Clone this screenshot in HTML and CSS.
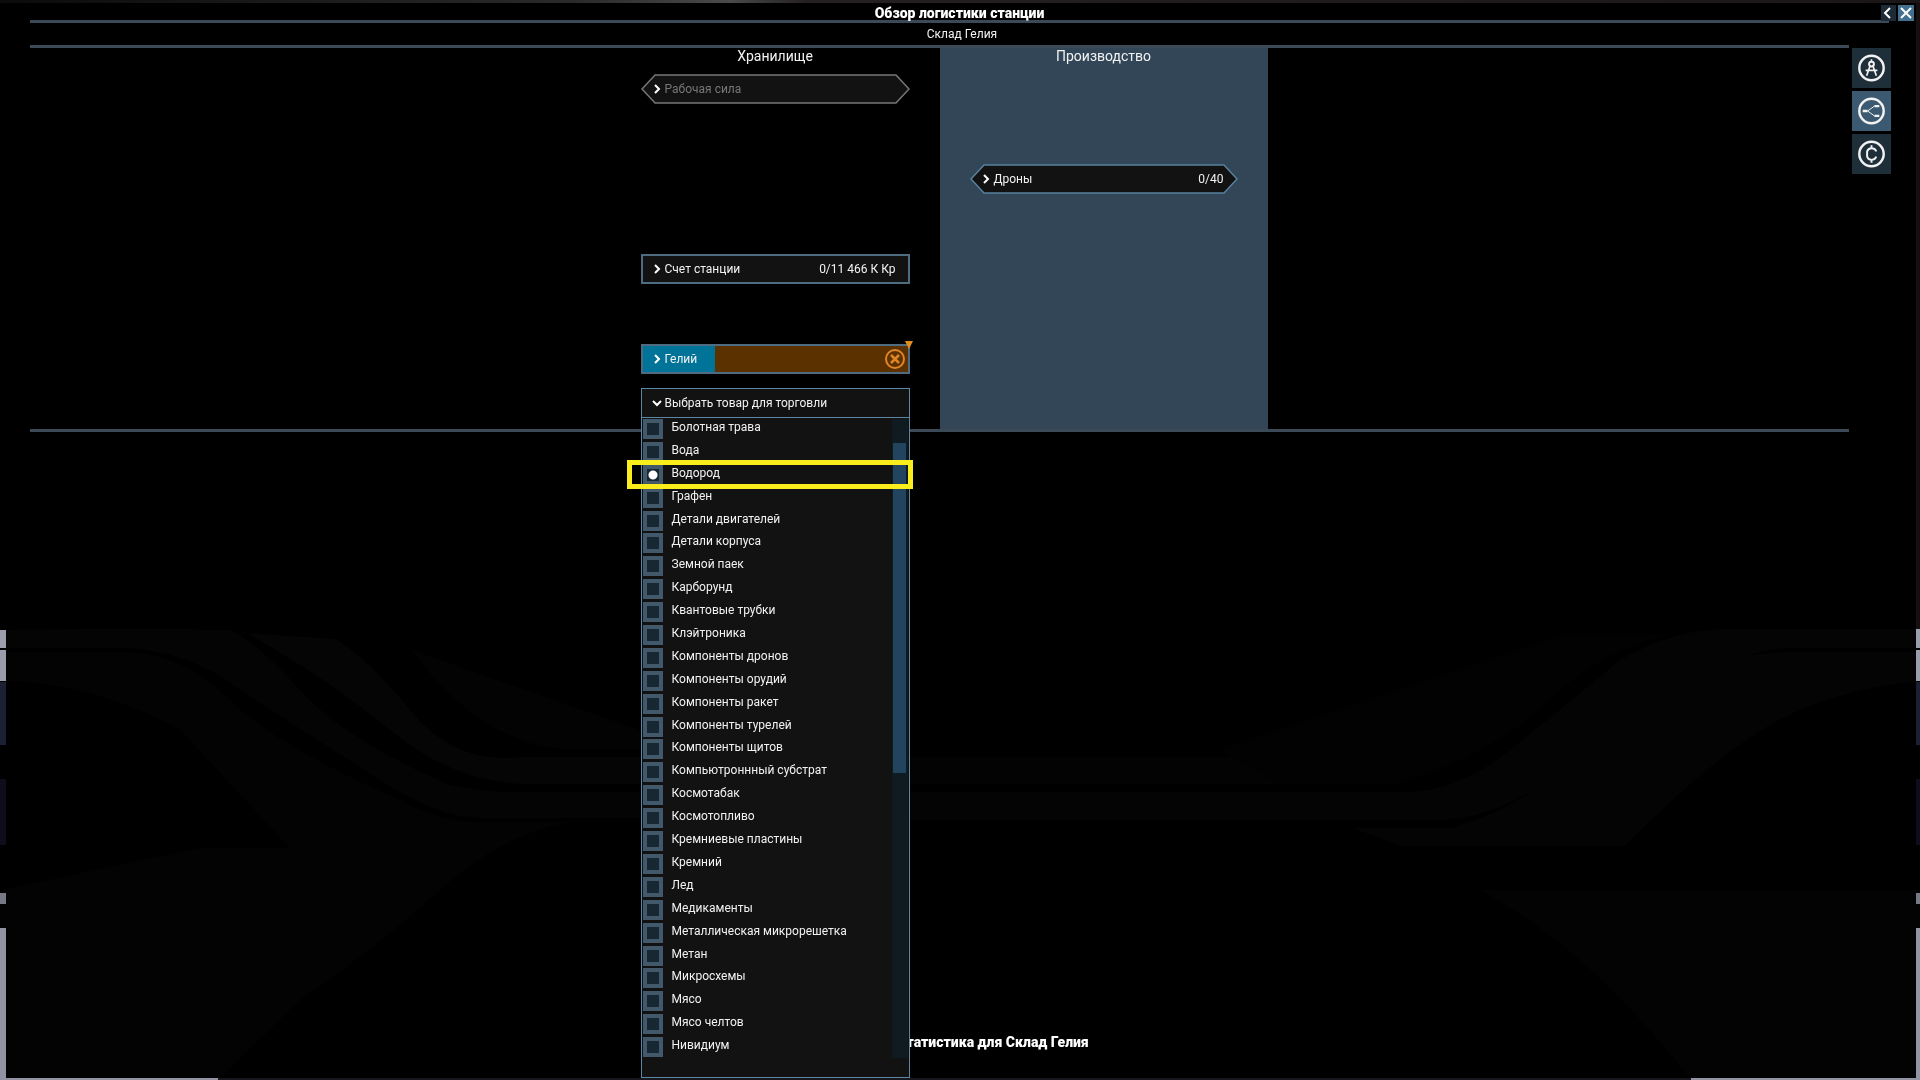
FILE: index.html
```html
<!DOCTYPE html>
<html lang="ru">
<head>
<meta charset="utf-8">
<title>Обзор логистики станции</title>
<link rel="stylesheet" href="styles.css">
</head>
<body>
<svg class="scene" viewBox="0 0 1920 1080" preserveAspectRatio="none" aria-hidden="true">
  <defs>
    <linearGradient id="sky" x1="0" x2="1">
      <stop offset="0" stop-color="#0c0b0c"/>
      <stop offset=".3" stop-color="#2a2a2a"/>
      <stop offset=".38" stop-color="#4a4a48"/>
      <stop offset=".42" stop-color="#242021"/>
      <stop offset="1" stop-color="#1b1718"/>
    </linearGradient>
  </defs>
  <rect width="1920" height="1080" fill="#000"/>
  <g fill="#050505">
    <path d="M0 629H190L335 639Q365 655 410 710T520 757L640 757V784H520Q450 780 390 730T245 632Z"/>
    <path d="M0 652H130Q185 655 230 700T400 800Q440 822 480 822H570Q500 835 440 890T300 1000L218 1080H0V890L200 848H290L180 730Q90 681 0 681Z" fill="#030303"/>
    <path d="M0 630H230Q255 640 300 690T450 785Q480 792 520 792H640V818H480Q440 818 380 780T240 690Q190 650 120 648H0Z" fill="#040404"/>
    <path d="M412 650L640 730V750H570Q480 745 412 650Z" fill="#030303"/>
    <path d="M910 757H1290V784H910Z" fill="#030303"/>
    <path d="M910 792H1410Q1460 790 1510 750T1620 660Q1670 631 1720 629H1920V648H1790Q1740 650 1700 685T1540 788Q1480 820 1440 820H910Z" fill="#040404"/>
    <path d="M1353 828H1450Q1500 815 1560 775T1700 672Q1740 652 1790 652H1920V681Q1830 690 1770 725T1625 846H1400Z" fill="#040404"/>
    <path d="M1480 890H1920V1080H1691Q1590 950 1480 890Z" fill="#030303"/>
    <path d="M1220 750L1560 635H1670Q1600 650 1550 700T1400 784H1280Z" fill="#020202"/>
  </g>
  <g>
    <path d="M0 0H1920V3H0Z" fill="url(#sky)"/>
    <path d="M1916 3H1920V629H1916Z" fill="#15100f"/>
    <path d="M0 630H6V648H0ZM0 650H6V681H0ZM1916 629H1920V648H1916ZM1916 650H1920V681H1916Z" fill="#9a9dac"/>
    <path d="M0 682H6V745H0ZM1916 682H1920V745H1916Z" fill="#1b2034"/>
    <path d="M0 779H6V845H0ZM1916 779H1920V845H1916Z" fill="#0d0d1c"/>
    <path d="M0 893H6V904H0ZM1916 893H1920V904H1916Z" fill="#777985"/>
    <path d="M0 928H6V1078H218V1080H0ZM1916 928H1920V1080H1691V1078H1916Z" fill="#9294a3"/>
    <path d="M218 1078H1691V1080H218Z" fill="#17171d"/>
  </g>
</svg>

<div class="window">
  <header class="titlebar">
    <h1 class="title">Обзор логистики станции</h1>
    <div class="controls">
      <button class="control" type="button" aria-label="Назад"><svg viewBox="0 0 15 16"><path d="M9 3L4 8l5 5"/></svg></button>
      <button class="control control-close" type="button" aria-label="Закрыть"><svg viewBox="0 0 16 16"><path d="M3 3l10 10M13 3L3 13"/></svg></button>
    </div>
  </header>
  <p class="subtitle">Склад Гелия</p>

  <div class="body">
    <main class="board">
      <section class="column column-storage">
        <h2 class="column-title">Хранилище</h2>
        <button class="node node-hex node-muted" type="button">
          <svg class="hex" viewBox="0 0 268 30" preserveAspectRatio="none"><path d="M14 1H254L267 15L254 29H14L1 15Z"/></svg>
          <svg class="chevron" viewBox="0 0 8 10"><path d="M2 1l4 4-4 4"/></svg>
          <span class="node-name">Рабочая сила</span>
        </button>
        <button class="node row-five" type="button">
          <svg class="chevron" viewBox="0 0 8 10"><path d="M2 1l4 4-4 4"/></svg>
          <span class="node-name">Счет станции</span>
          <span class="node-value">0/11 466 К Кр</span>
        </button>
        <button class="node node-ware row-seven" type="button">
          <svg class="chevron" viewBox="0 0 8 10"><path d="M2 1l4 4-4 4"/></svg>
          <span class="node-name">Гелий</span>
          <svg class="blocked" viewBox="0 0 20 20"><circle cx="10" cy="10" r="9"/><path d="M6 6l8 8M14 6l-8 8" stroke-width="2.5"/></svg>
          <svg class="marker" viewBox="0 0 8 8"><path d="M0 0H8L4 8Z"/></svg>
        </button>
        <div class="picker row-eight">
          <div class="dropdown">
            <button class="dropdown-head" type="button" aria-expanded="true">
              <svg class="chevron chevron-down" viewBox="0 0 10 8"><path d="M1 2l4 4 4-4"/></svg>
              <span class="node-name">Выбрать товар для торговли</span>
            </button>
            <div class="dropdown-body">
              <div class="wares">
                <label class="ware"><input type="radio" name="ware"><span>Болотная трава</span></label>
                <label class="ware"><input type="radio" name="ware"><span>Вода</span></label>
                <label class="ware ware-marked"><input type="radio" name="ware" checked><span>Водород</span></label>
                <label class="ware"><input type="radio" name="ware"><span>Графен</span></label>
                <label class="ware"><input type="radio" name="ware"><span>Детали двигателей</span></label>
                <label class="ware"><input type="radio" name="ware"><span>Детали корпуса</span></label>
                <label class="ware"><input type="radio" name="ware"><span>Земной паек</span></label>
                <label class="ware"><input type="radio" name="ware"><span>Карборунд</span></label>
                <label class="ware"><input type="radio" name="ware"><span>Квантовые трубки</span></label>
                <label class="ware"><input type="radio" name="ware"><span>Клэйтроника</span></label>
                <label class="ware"><input type="radio" name="ware"><span>Компоненты дронов</span></label>
                <label class="ware"><input type="radio" name="ware"><span>Компоненты орудий</span></label>
                <label class="ware"><input type="radio" name="ware"><span>Компоненты ракет</span></label>
                <label class="ware"><input type="radio" name="ware"><span>Компоненты турелей</span></label>
                <label class="ware"><input type="radio" name="ware"><span>Компоненты щитов</span></label>
                <label class="ware"><input type="radio" name="ware"><span>Компьютроннный субстрат</span></label>
                <label class="ware"><input type="radio" name="ware"><span>Космотабак</span></label>
                <label class="ware"><input type="radio" name="ware"><span>Космотопливо</span></label>
                <label class="ware"><input type="radio" name="ware"><span>Кремниевые пластины</span></label>
                <label class="ware"><input type="radio" name="ware"><span>Кремний</span></label>
                <label class="ware"><input type="radio" name="ware"><span>Лед</span></label>
                <label class="ware"><input type="radio" name="ware"><span>Медикаменты</span></label>
                <label class="ware"><input type="radio" name="ware"><span>Металлическая микрорешетка</span></label>
                <label class="ware"><input type="radio" name="ware"><span>Метан</span></label>
                <label class="ware"><input type="radio" name="ware"><span>Микросхемы</span></label>
                <label class="ware"><input type="radio" name="ware"><span>Мясо</span></label>
                <label class="ware"><input type="radio" name="ware"><span>Мясо челтов</span></label>
                <label class="ware"><input type="radio" name="ware"><span>Нивидиум</span></label>
              </div>
              <div class="track"><div class="thumb"></div></div>
            </div>
          </div>
        </div>
      </section>
      <section class="column column-active">
        <h2 class="column-title">Производство</h2>
        <button class="node node-hex row-three" type="button">
          <svg class="hex" viewBox="0 0 268 30" preserveAspectRatio="none"><path d="M14 1H254L267 15L254 29H14L1 15Z"/></svg>
          <svg class="chevron" viewBox="0 0 8 10"><path d="M2 1l4 4-4 4"/></svg>
          <span class="node-name">Дроны</span>
          <span class="node-value">0/40</span>
        </button>
      </section>
    </main>
    <nav class="rail">
      <button class="tool" type="button" aria-label="Строительство">
        <svg viewBox="0 0 40 40"><circle cx="20" cy="20" r="12.500" stroke-width="2.500"/><circle cx="20" cy="16" r="2.500" stroke-width="2"/><path d="M20 11v3M18.500 18L15 28M21.500 18L25 28M14 22.500h12" stroke-width="1.700"/></svg>
      </button>
      <button class="tool tool-active" type="button" aria-label="Логистика">
        <svg viewBox="0 0 40 40"><circle cx="20" cy="20" r="12.500" stroke-width="2.500"/><path d="M11 20h5M23 15h5M23 25h5" stroke-width="2.500"/><path d="M16 20l7-5M16 20l7 5" stroke-width="1"/></svg>
      </button>
      <button class="tool" type="button" aria-label="Финансы">
        <svg viewBox="0 0 40 40"><circle cx="20" cy="20" r="12.500" stroke-width="2.500"/><path d="M24.500 17.500v-1q-1-2.500-4.500-2.500t-4.500 3.500v5q1 3.500 4.500 3.500t4.500-2.500v-1M20 11v3M20 26v3" stroke-width="2"/></svg>
      </button>
    </nav>
  </div>
  <h2 class="stats">Статистика для Склад Гелия</h2>
</div>
</body>
</html>
```
FILE: styles.css
```css
* { box-sizing: border-box; }

body {
  margin: 0;
  background: #000;
  color: #f2f2f2;
  font: 400 12px/16px Roboto, sans-serif;
}

h1, h2, p { margin: 0; }

button {
  padding: 0;
  border: 0;
  color: inherit;
  font: inherit;
  cursor: pointer;
}

svg { display: block; fill: none; stroke: currentColor; }

.scene {
  position: fixed;
  inset: 0;
  z-index: -1;
  width: 100%;
  height: 100%;
  stroke: none;
}

.window {
  display: flex;
  flex-direction: column;
  min-height: 100vh;
  padding: 4px 6px 30px 30px;
}

/* Title rows */
.titlebar {
  display: flex;
  height: 19px;
}

.title {
  flex: 1;
  border-bottom: 3px solid #3c4956;
  color: #fff;
  font-size: 14px;
  line-height: 19px;
  font-weight: 900;
  text-align: center;
}

.controls { display: flex; gap: 2px; margin-left: -8px; padding-top: 1px; }

.control {
  width: 15px;
  height: 16px;
  background: #1c2b36;
  color: #fff;
}

.control svg { width: 100%; height: 100%; stroke-width: 2; }
.control-close { width: 16px; background: #41718f; }

.subtitle {
  margin-right: 20px;
  padding: 3px 0;
  text-align: center;
}

/* Station board */
.body {
  display: flex;
  align-items: flex-start;
  gap: 3px;
}

.board {
  flex: 1;
  display: flex;
  justify-content: center;
  height: 387px;
  border: solid #3c4956;
  border-width: 3px 0;
}

.column {
  display: grid;
  grid-template-rows: 11px repeat(8, 30px);
  row-gap: 15px;
  width: 328px;
  padding: 0 30px;
}

.column-storage { padding-left: 29px; }
.column-active { background: #324657; }

.column-title {
  font-size: 14px;
  line-height: 16px;
  font-weight: 400;
  text-align: center;
}

.row-three { grid-row: 4; }
.row-five { grid-row: 6; }
.row-seven { grid-row: 8; }
.row-eight { grid-row: 9; }

.node {
  position: relative;
  display: flex;
  align-items: center;
  gap: 4px;
  padding: 0 12px 0 10px;
  border: 2px solid #4f6b80;
  background: #121212;
  text-align: left;
}

.node-hex { padding: 0 14px 0 12px; border: 0; background: none; }
.hex { position: absolute; inset: 0; width: 100%; height: 100%; fill: #121212; stroke: #58819f; stroke-width: 1.5; }
.node-muted .hex { stroke: #777; }
.node-muted .node-name { color: #777; }

.node-name, .node-value { position: relative; white-space: nowrap; }
.node-value { margin-left: auto; }

.chevron { position: relative; width: 8px; height: 10px; color: #fff; stroke-width: 2; }
.chevron-down { width: 10px; height: 8px; }

.node-ware {
  padding-right: 3px;
  background: linear-gradient(90deg, #007399 27%, #5b3100 27%);
}

.blocked { width: 20px; height: 20px; margin-left: auto; stroke: #e08526; stroke-width: 2; }
.marker { position: absolute; top: -5px; right: -5px; width: 8px; height: 8px; fill: #e08f1f; stroke: none; }

/* Ware picker, opens over the board */
.picker { position: relative; }

.dropdown {
  position: absolute;
  top: -1px;
  left: 0;
  width: 100%;
  z-index: 1;
  border: 1px solid #5d86a3;
  background: #121212;
}

.dropdown-head {
  display: flex;
  align-items: center;
  gap: 3px;
  width: 100%;
  height: 29px;
  padding-left: 10px;
  border-bottom: 1px solid #5d86a3;
  background: none;
}

.dropdown-body {
  display: flex;
  padding: 1px 1px 17px;
}

.wares {
  flex: 1;
  display: grid;
  grid-template-rows: repeat(28, 1fr);
  height: 641px;
}

.ware {
  position: relative;
  display: flex;
  gap: 9px;
  line-height: 16px;
}

.ware input {
  appearance: none;
  width: 20px;
  height: 20px;
  margin: 0;
  border: 4px solid #41596b;
  background: #182832;
}

.ware input:checked { background: radial-gradient(circle, #fff 4px, #182832 5px); }

.ware-marked::after {
  content: "";
  position: absolute;
  inset: -5px -21px -1px -16px;
  z-index: 1;
  border: 5px solid #faed1c;
}

.track { width: 16px; padding: 24px 2px 0 1px; margin-bottom: 2px; background: #101a21; }
.thumb { height: 330px; background: #22445f; }

/* Side tools */
.rail {
  display: flex;
  flex-direction: column;
  gap: 3px;
  width: 62px;
  padding-top: 3px;
}

.tool { width: 39px; height: 40px; background: #1f2f3a; color: #f2f2f2; }
.tool svg { width: 100%; height: 100%; stroke-width: 1.5; }
.tool-active { background: #3b5a71; }

.stats {
  margin: auto 0 0 42px;
  color: #fff;
  font-size: 14px;
  line-height: 16px;
  font-weight: 900;
  text-align: center;
}
```
